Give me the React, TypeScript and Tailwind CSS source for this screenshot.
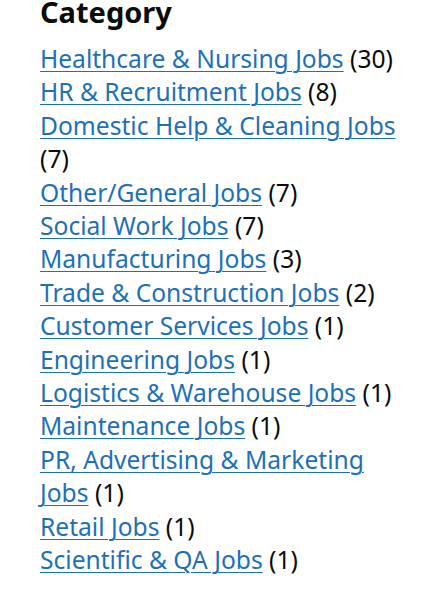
import React from 'react';

const categories: { name: string; count: number }[] = [
  { name: 'Healthcare & Nursing Jobs', count: 30 },
  { name: 'HR & Recruitment Jobs', count: 8 },
  { name: 'Domestic Help & Cleaning Jobs', count: 7 },
  { name: 'Other/General Jobs', count: 7 },
  { name: 'Social Work Jobs', count: 7 },
  { name: 'Manufacturing Jobs', count: 3 },
  { name: 'Trade & Construction Jobs', count: 2 },
  { name: 'Customer Services Jobs', count: 1 },
  { name: 'Engineering Jobs', count: 1 },
  { name: 'Logistics & Warehouse Jobs', count: 1 },
  { name: 'Maintenance Jobs', count: 1 },
  { name: 'PR, Advertising & Marketing Jobs', count: 1 },
  { name: 'Retail Jobs', count: 1 },
  { name: 'Scientific & QA Jobs', count: 1 },
];

export default function App() {
  return (
    <div
      className="min-h-[600px] bg-white pl-[40px] pr-[25px] overflow-hidden text-[#0b0c0c]"
      style={{ fontFamily: '"Noto Sans", Arial, sans-serif' }}
    >
      {/* Filter heading */}
      <h2 className="-mt-[8px] mb-[10px] text-[29px] font-bold leading-[40px]">Category</h2>

      <ul className="text-[24.6px] leading-[33.4px]">
        {categories.map((c) => (
          <li key={c.name}>
            <a
              href="#"
              className="text-[#1d70b8] underline decoration-1 underline-offset-[3px]"
            >
              {c.name}
            </a>{' '}
            ({c.count})
          </li>
        ))}
      </ul>
    </div>
  );
}
